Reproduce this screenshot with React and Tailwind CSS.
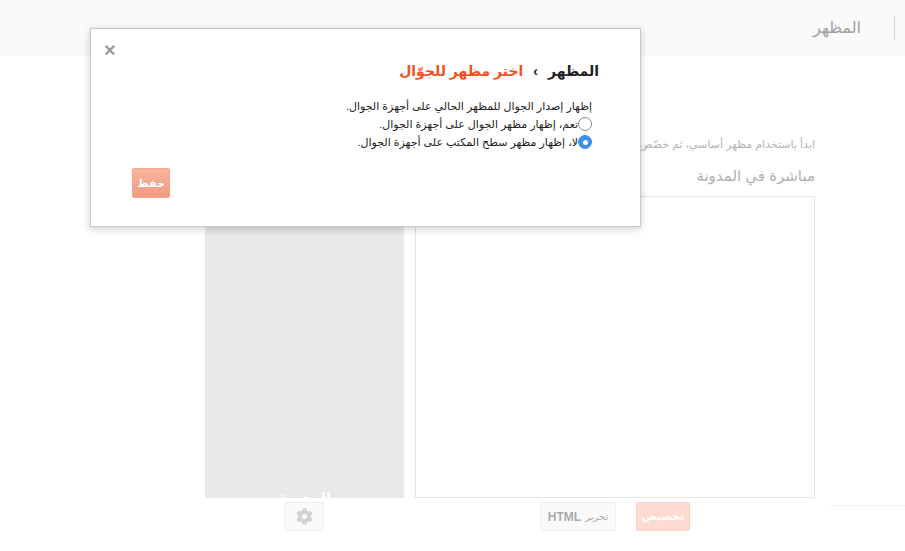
import { FaCog } from 'react-icons/fa'

const font = { fontFamily: '"Liberation Sans", "DejaVu Sans", Arial, sans-serif' }

const Radio = ({ checked }) => (
  <span
    className={`inline-flex w-[14px] h-[14px] rounded-full items-center justify-center shrink-0 ${
      checked ? 'bg-[#3d8fef] border border-[#3d8fef]' : 'bg-white border border-[#8a8a8a]'
    }`}
  >
    {checked && <span className="w-[5px] h-[5px] rounded-full bg-white" />}
  </span>
)

export default function App() {
  return (
    <div className="relative w-[905px] h-[551px] bg-white overflow-hidden" style={font}>
      {/* Header */}
      <div className="h-[56px] bg-[#fafafa] flex items-center justify-end">
        <span className="text-[16px] text-[#a0a0a0] mr-[33px]">المظهر</span>
        <div className="w-px h-[24px] bg-[#d0d0d0] mr-[10px]" />
      </div>

      {/* Page body */}
      <div dir="rtl" className="pr-[90px] pt-[80px]">
        <p className="text-[11px] text-[#b4b4b4] h-[16px] leading-[16px] w-[400px] overflow-hidden whitespace-nowrap">
          ابدأ باستخدام مظهر أساسي، ثم خصّص الخلفية والتخطيط والألوان والخطوط
        </p>
        <h2 className="mt-[14px] text-[15px] text-[#b0b0b0] leading-[20px]">مباشرة في المدونة</h2>
        <div className="mt-[10px] flex gap-[11px]">
          <div className="w-[400px] h-[302px] border border-[#e6e6e6] bg-white" />
          <div className="w-[199px] h-[302px] bg-[#e9e9e9] flex items-end justify-center overflow-hidden">
            <span className="text-[15px] font-bold text-white leading-[8px] translate-y-[4px]">المدونة</span>
          </div>
        </div>
        <div className="mt-[4px] flex items-center">
          <div className="mr-[125px] w-[54px] h-[29px] rounded-[2px] bg-[#fddbd1] border border-[#fcd3c6] flex items-center justify-center text-[11px] font-bold text-white">
            تخصيص
          </div>
          <div className="mr-[20px] w-[76px] h-[29px] rounded-[2px] bg-[#fafafa] border border-[#efefef] flex items-center justify-center gap-[4px] text-[11px] font-bold text-[#ababab]">
            <span className="font-normal text-[10px]">تحرير</span>
            <span className="text-[12px]">HTML</span>
          </div>
          <div className="mr-[216px] w-[40px] h-[29px] rounded-[2px] bg-[#fafafa] border border-[#efefef] flex items-center justify-center">
            <FaCog className="w-[17px] h-[17px] text-[#d2d2d2]" />
          </div>
        </div>
      </div>
      <div className="absolute left-[830px] top-[505px] w-[75px] h-px bg-[#f2f2f2]" />

      {/* Dialog */}
      <div className="absolute left-[90px] top-[28px] w-[551px] h-[199px] bg-white border border-[#c8c8c8] shadow-[0_2px_8px_rgba(0,0,0,0.2)]">
        <button className="absolute left-[13px] top-[11px] text-[#9a9a9a] text-[20px] font-bold leading-none">×</button>
        <div dir="rtl" className="pr-[41px] pt-[31px]">
          <h1 className="text-[14px] font-bold leading-[22px] flex items-center gap-[10px]">
            <span className="text-[#222]">المظهر</span>
            <span className="text-[#222] text-[14px]">›</span>
            <span className="text-[#f4511e]">اختر مظهر للجوّال</span>
          </h1>
          <div className="mt-[15px] text-[11px] text-[#222] leading-[18px] pr-[7px]">
            <p>إظهار إصدار الجوال للمظهر الحالي على أجهزة الجوال.</p>
            <label className="flex items-center">
              <Radio />
              <span>نعم، إظهار مظهر الجوال على أجهزة الجوال.</span>
            </label>
            <label className="flex items-center">
              <Radio checked />
              <span>لا، إظهار مظهر سطح المكتب على أجهزة الجوال.</span>
            </label>
          </div>
        </div>
        <div className="absolute left-[41px] top-[139px] w-[38px] h-[30px] rounded-[2px] border border-[#f2a68f] bg-gradient-to-b from-[#f8b39d] to-[#f29a7f] flex items-center justify-center text-[11px] font-bold text-white">
          حفظ
        </div>
      </div>
    </div>
  )
}
